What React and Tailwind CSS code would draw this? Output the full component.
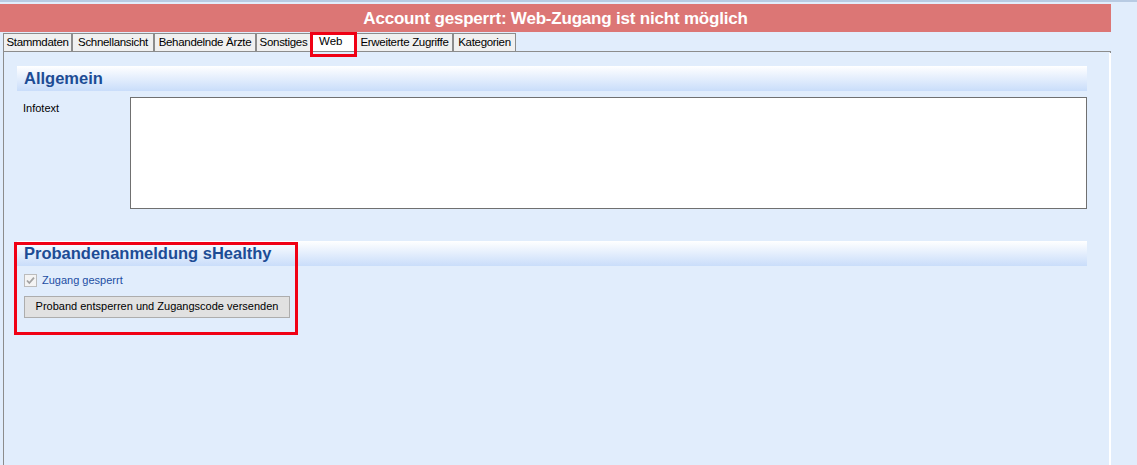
import React from 'react';

const tabs = [
  { label: 'Stammdaten', w: 69 },
  { label: 'Schnellansicht', w: 82 },
  { label: 'Behandelnde Ärzte', w: 102 },
  { label: 'Sonstiges', w: 55 },
  { label: 'Web', w: 45, active: true },
  { label: 'Erweiterte Zugriffe', w: 97 },
  { label: 'Kategorien', w: 63 },
];

const font = { fontFamily: '"Liberation Sans", Arial, sans-serif' };

const SectionHeader = ({ title }) => (
  <div className="h-[25px] w-[1070px] bg-gradient-to-b from-white to-[#c9ddfa] flex items-center pl-[7px] pb-[1px]">
    <span className="text-[16.5px] font-bold text-[#1d4c95] leading-none">{title}</span>
  </div>
);

const DisabledCheck = () => (
  <svg width="13" height="13" viewBox="0 0 13 13">
    <rect x="0.5" y="0.5" width="12" height="12" fill="#f4f4f4" stroke="#bcbcbc" />
    <path d="M3 6.5 L5.3 9 L10 3.6" fill="none" stroke="#a3a3a3" strokeWidth="1.8" />
  </svg>
);

export default function App() {
  return (
    <div
      className="relative w-[1137px] h-[465px] overflow-hidden bg-[#e1edfc] border-t-2 border-[#b8cbe3]"
      style={font}
    >
      <div className="pt-[2px]">
        <div className="w-[1111px] h-[28px] bg-[#dc7675] flex items-center justify-center">
          <span className="text-white font-bold text-[17px] leading-none tracking-[-0.2px]">
            Account gesperrt: Web-Zugang ist nicht möglich
          </span>
        </div>
      </div>

      <div className="flex pl-[3px] mt-[1px] h-[18px]">
        {tabs.map((t) => (
          <div
            key={t.label}
            style={{ width: t.w }}
            className={
              t.active
                ? 'h-[19px] bg-white flex items-start justify-start pl-[8px] pt-[1px] text-[11.5px] text-black -mt-[1px]'
                : 'h-[18px] bg-[#f0f0f0] border border-b-0 border-[#8c8c8c] flex items-center justify-center text-[11.5px] tracking-[-0.3px] text-black'
            }
          >
            {t.label}
          </div>
        ))}
      </div>

      <div className="ml-[3px] w-[1108px] h-[420px] border-t border-l border-r border-[#8c8c8c] bg-[#e1edfc] pl-[13px] pt-[14px]">
        <SectionHeader title="Allgemein" />
        <div className="flex mt-[6px]">
          <div className="w-[113px] pl-[6px] pt-[3px] text-[11px] text-black">Infotext</div>
          <div className="w-[957px] h-[112px] bg-white border border-[#707070]" />
        </div>

        <div className="mt-[32px]">
          <SectionHeader title="Probandenanmeldung sHealthy" />
          <div className="flex items-center gap-[5px] pl-[7px] mt-[6px]">
            <DisabledCheck />
            <span className="text-[11px] text-[#1d4ea3]">Zugang gesperrt</span>
          </div>
          <div className="pl-[7px] mt-[7px]">
            <button className="w-[266px] h-[22px] bg-[#e1e1e1] border border-[#adadad] text-[11px] text-black flex items-center justify-center">
              Proband entsperren und Zugangscode versenden
            </button>
          </div>
        </div>
      </div>

      <div className="absolute right-[26px] top-[51px] w-[2px] h-[414px] bg-white" />
      <div className="absolute left-[310px] top-[30px] w-[47px] h-[25px] border-[3px] border-[#f00014]" />
      <div className="absolute left-[14px] top-[240px] w-[284px] h-[93px] border-[3px] border-[#f00014]" />
    </div>
  );
}
